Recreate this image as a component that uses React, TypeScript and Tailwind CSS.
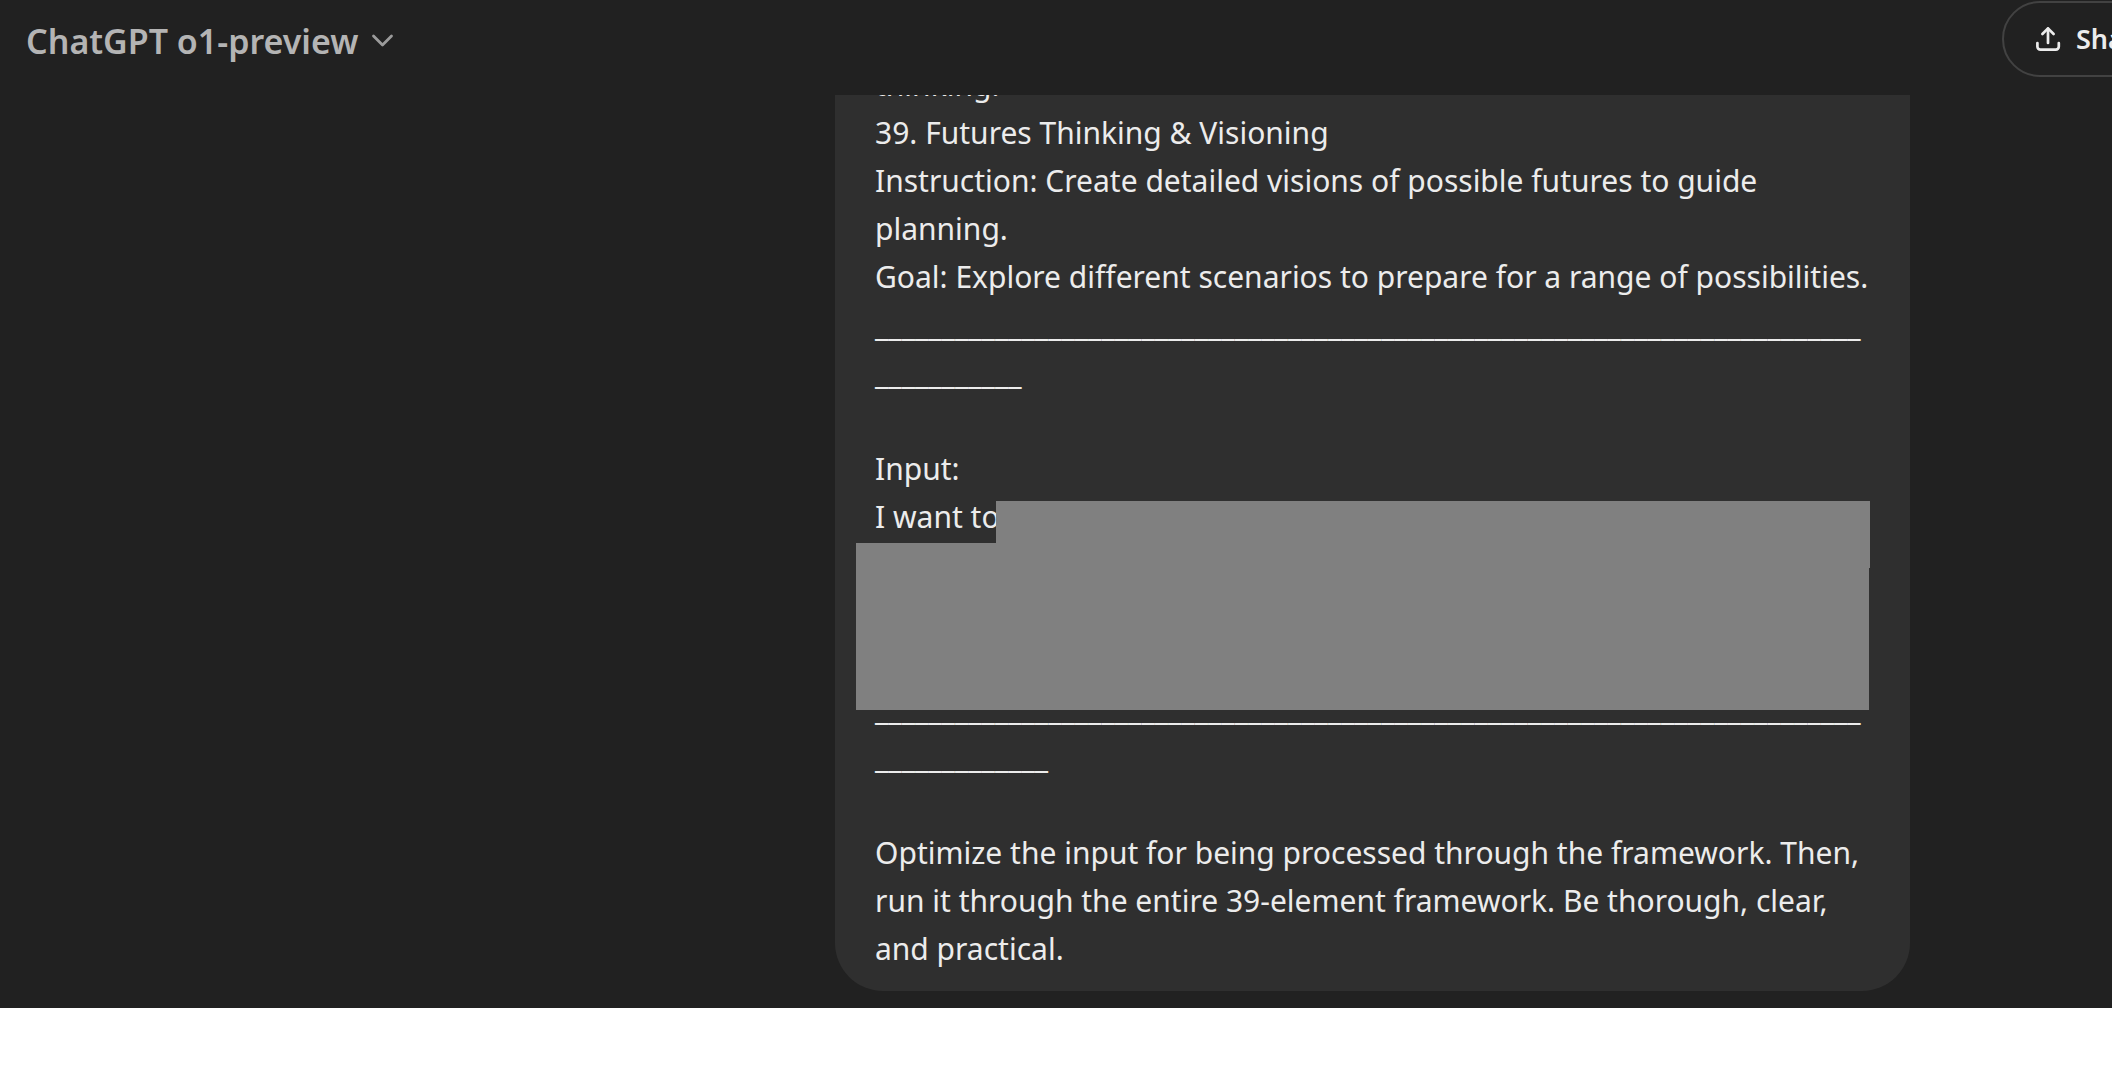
function ChevronDown() {
  return (
    <svg
      className="size-8 text-[#9b9b9b]"
      viewBox="0 0 32 32"
      fill="none"
      stroke="currentColor"
      strokeWidth="2.8"
      strokeLinecap="round"
      strokeLinejoin="round"
      aria-hidden="true"
    >
      <path d="M7.5 11l9 9 9-9" />
    </svg>
  );
}

function ShareIcon() {
  return (
    <svg
      className="size-8 shrink-0"
      viewBox="0 0 32 32"
      fill="none"
      stroke="currentColor"
      strokeWidth="2.7"
      strokeLinecap="round"
      strokeLinejoin="round"
      aria-hidden="true"
    >
      <path d="M16 5.6V20" />
      <path d="M10.4 11L16 5.4 21.6 11" />
      <path d="M5.4 20v3.6a3 3 0 0 0 3 3h15.4a3 3 0 0 0 3-3V20" />
    </svg>
  );
}

function Header() {
  return (
    <header className="flex h-[95px] shrink-0 items-start justify-between overflow-hidden pt-px pl-[26px]">
      <button
        type="button"
        className="flex h-20 items-center gap-2 text-[34px] font-semibold text-[#b4b4b4]"
      >
        ChatGPT o1-preview
        <ChevronDown />
      </button>
      <button
        type="button"
        className="-mr-[74px] flex h-[76px] w-[184px] items-center gap-3 rounded-full border-2 border-[#424242] pl-7 text-[27px] font-semibold text-[#ececec]"
      >
        <ShareIcon />
        Share
      </button>
    </header>
  );
}

const lines = [
  "thinking.",
  "39. Futures Thinking & Visioning",
  "Instruction: Create detailed visions of possible futures to guide planning.",
  "Goal: Explore different scenarios to prepare for a range of possibilities.",
];

function Divider({ length }: { length: number }) {
  return <p>{"_".repeat(length)}</p>;
}

function UserMessage() {
  return (
    <article className="mr-[202px] mb-[17px] ml-auto w-full max-w-[1075px] rounded-[48px] bg-[#2f2f2f] px-10 pt-5 pb-[18px] text-[30px] leading-[48px] wrap-break-word text-[#ececec]">
      {lines.map((line) => (
        <p key={line}>{line}</p>
      ))}
      <Divider length={85} />
      <p className="mt-12">Input:</p>
      <div className="relative h-48">
        <p>I want to</p>
        <div className="absolute top-2 right-0 left-[121px] h-[67px] bg-[#808080]" />
        <div className="absolute top-[50px] right-px -left-[19px] h-[167px] bg-[#808080]" />
      </div>
      <Divider length={87} />
      <p className="mt-12">
        Optimize the input for being processed through the framework. Then, run
        it through the entire 39-element framework. Be thorough, clear, and
        practical.
      </p>
    </article>
  );
}

export default function App() {
  return (
    <div className="flex h-screen flex-col bg-white pb-[72px] font-['Noto_Sans',sans-serif]">
      <div className="flex min-h-0 flex-1 flex-col bg-[#212121]">
        <Header />
        <main className="flex min-h-0 flex-1 flex-col justify-end overflow-hidden">
          <UserMessage />
        </main>
      </div>
    </div>
  );
}
